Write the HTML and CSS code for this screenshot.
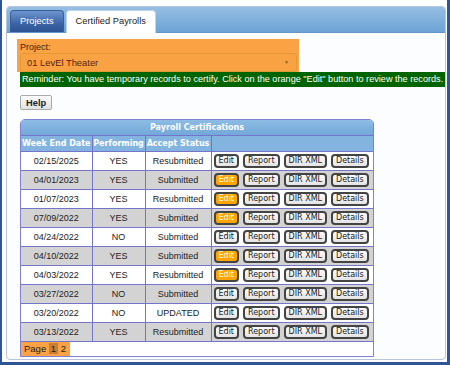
FILE: index.html
```html
<!DOCTYPE html>
<html lang="en">
  <head>
    <meta charset="UTF-8" />
    <title>Certified Payrolls</title>
    <link rel="stylesheet" href="styles.css">
  </head>
  <body>
    <div class="frame">
      <div class="panel">
        <div class="tabs">
          <span class="tab">Projects</span>
          <span class="tab active">Certified Payrolls</span>
        </div>

        <div class="content">
          <div class="project">
            <label>Project:</label>
            <div class="select">01 LevEl Theater<span class="arrow">&#9660;</span></div>
          </div>
          <div class="reminder">Reminder: You have temporary records to certify. Click on the orange "Edit" button to review the records.</div>

          <button class="help">Help</button>

          <div class="grid">
            <table>
              <colgroup>
                <col style="width: 71px">
                <col style="width: 53px">
                <col style="width: 66px">
                <col>
              </colgroup>
              <tr class="title"><th colspan="4">Payroll Certifications</th></tr>
              <tr class="heads">
                <th>Week End Date</th>
                <th>Performing</th>
                <th>Accept Status</th>
                <th></th>
              </tr>
              <tr>
                <td>02/15/2025</td><td>YES</td><td>Resubmitted</td>
                <td class="actions"><button>Edit</button><button>Report</button><button>DIR XML</button><button>Details</button></td>
              </tr>
              <tr class="alt">
                <td>04/01/2023</td><td>YES</td><td>Submitted</td>
                <td class="actions"><button class="todo">Edit</button><button>Report</button><button>DIR XML</button><button>Details</button></td>
              </tr>
              <tr>
                <td>01/07/2023</td><td>YES</td><td>Resubmitted</td>
                <td class="actions"><button class="todo">Edit</button><button>Report</button><button>DIR XML</button><button>Details</button></td>
              </tr>
              <tr class="alt">
                <td>07/09/2022</td><td>YES</td><td>Submitted</td>
                <td class="actions"><button class="todo">Edit</button><button>Report</button><button>DIR XML</button><button>Details</button></td>
              </tr>
              <tr>
                <td>04/24/2022</td><td>NO</td><td>Submitted</td>
                <td class="actions"><button>Edit</button><button>Report</button><button>DIR XML</button><button>Details</button></td>
              </tr>
              <tr class="alt">
                <td>04/10/2022</td><td>YES</td><td>Submitted</td>
                <td class="actions"><button class="todo">Edit</button><button>Report</button><button>DIR XML</button><button>Details</button></td>
              </tr>
              <tr>
                <td>04/03/2022</td><td>YES</td><td>Resubmitted</td>
                <td class="actions"><button class="todo">Edit</button><button>Report</button><button>DIR XML</button><button>Details</button></td>
              </tr>
              <tr class="alt">
                <td>03/27/2022</td><td>NO</td><td>Submitted</td>
                <td class="actions"><button>Edit</button><button>Report</button><button>DIR XML</button><button>Details</button></td>
              </tr>
              <tr>
                <td>03/20/2022</td><td>NO</td><td>UPDATED</td>
                <td class="actions"><button>Edit</button><button>Report</button><button>DIR XML</button><button>Details</button></td>
              </tr>
              <tr class="alt">
                <td>03/13/2022</td><td>YES</td><td>Resubmitted</td>
                <td class="actions"><button>Edit</button><button>Report</button><button>DIR XML</button><button>Details</button></td>
              </tr>
              <tr class="pager">
                <td colspan="4"><span class="pages">Page <span class="current">1</span> 2</span></td>
              </tr>
            </table>
          </div>
        </div>
      </div>
    </div>
  </body>
</html>
```

FILE: styles.css
```css
body {
  margin: 0;
  background: #fff;
  font-family: "Liberation Sans", Arial, sans-serif;
  font-size: 9px;
  color: #222;
}

/* outer window frame */
.frame {
  box-sizing: border-box;
  width: 450px;
  height: 365px;
  padding: 6px 1px 2px 4px;
  border-left: 2px solid #2f5597;
  border-right: 3px solid #2f5597;
  border-bottom: 3px solid #2f5597;
}
.panel {
  box-sizing: border-box;
  height: 100%;
  border: 1px solid #b7c6dc;
  border-radius: 4px;
  background: #fcfdff;
}

/* tab strip */
.tabs {
  box-sizing: border-box;
  height: 26px;
  display: flex;
  align-items: flex-end;
  gap: 2px;
  padding-left: 3px;
  background: linear-gradient(#95bee2, #80b1dc 50%, #6da3d5);
  border-bottom: 1px solid #6396ca;
  border-radius: 3px 3px 0 0;
}
.tab {
  box-sizing: border-box;
  height: 22px;
  line-height: 21px;
  padding: 0 9px;
  border: 1px solid #3b5e98;
  border-bottom: none;
  border-radius: 4px 4px 0 0;
  background: linear-gradient(#6c95d0, #3c64a5 60%, #2d5392);
  color: #fff;
  font-size: 9.3px;
}
.tab.active {
  height: 23px;
  margin-bottom: -1px;
  border-color: #c3d3e6;
  background: #fff;
  color: #222;
}

.content {
  padding: 6px 0 0 10px;
}

/* project picker */
.project {
  box-sizing: border-box;
  width: 282px;
  height: 33px;
  padding: 3px 2px 0 3px;
  background: #fba244;
}
.project label {
  display: block;
  line-height: 11px;
  color: #3a2410;
}
.select {
  box-sizing: border-box;
  height: 19px;
  display: flex;
  justify-content: space-between;
  padding: 0 7px 0 6px;
  line-height: 17px;
  border: 1px solid #e39a32;
  border-radius: 3px;
  background: #f8a243;
  color: #5a1e0e;
  font-size: 9.4px;
}
.arrow {
  font-size: 5px;
  color: #8a5a20;
}

.reminder {
  box-sizing: border-box;
  width: 425px;
  height: 15px;
  margin-left: 3px;
  padding-left: 2px;
  line-height: 15px;
  white-space: nowrap;
  background: #006400;
  color: #fff;
  font-size: 9.15px;
}

.help {
  display: block;
  height: 15px;
  margin: 8px 0 0 3px;
  padding: 0 5px;
  border: 1px solid #a9a9a9;
  border-radius: 2px;
  background: linear-gradient(#fbfbfb, #e2e2e2);
  font-family: "Liberation Sans", Arial, sans-serif;
  font-size: 9.3px;
  font-weight: bold;
  color: #222;
}

/* payroll grid */
.grid {
  width: 354px;
  margin: 9px 0 0 3px;
  box-sizing: border-box;
  border: 1px solid #8080d4;
  border-radius: 5px 5px 0 0;
  overflow: hidden;
  background: #fff;
}
table {
  width: 100%;
  border-collapse: collapse;
}
th, td {
  border: 1px solid #7474ca;
  padding: 0;
  text-align: center;
}
tr > :first-child {
  border-left: none;
}
tr > :last-child {
  border-right: none;
}
.title th {
  height: 15px;
  border-top: none;
  background: linear-gradient(#8dbce4, #72a8d9);
  color: #fff;
  font-family: "DejaVu Sans", Verdana, sans-serif;
  font-size: 8px;
  font-weight: bold;
}
.heads th {
  height: 15px;
  background: #83b4df;
  color: #fff;
  font-family: "DejaVu Sans", Verdana, sans-serif;
  font-size: 8px;
  font-weight: bold;
  white-space: nowrap;
}
td {
  height: 18px;
  background: #fff;
}
tr.alt td {
  background: #d3d3d3;
}
.actions {
  text-align: left;
  padding-left: 2px;
  white-space: nowrap;
}
.actions button {
  display: inline-flex;
  align-items: center;
  box-sizing: border-box;
  height: 14px;
  margin-right: 4px;
  padding: 0 3px;
  border: 2px solid #444;
  border-radius: 4px;
  background: linear-gradient(#fafafa, #e4e4e4);
  font-family: "DejaVu Sans", Verdana, sans-serif;
  font-size: 8px;
  line-height: 10px;
  color: #222;
  vertical-align: middle;
}
.actions button.todo {
  background: #ffa500;
  color: #fff;
}

.pager td {
  height: 14px;
  text-align: left;
  border-bottom: none;
  background: #fff;
}
.pages {
  display: inline-block;
  padding: 0 4px 0 3px;
  line-height: 14px;
  background: #fba244;
  font-size: 9.5px;
}
.current {
  padding: 0 2px;
  background: #c97c37;
}
```
